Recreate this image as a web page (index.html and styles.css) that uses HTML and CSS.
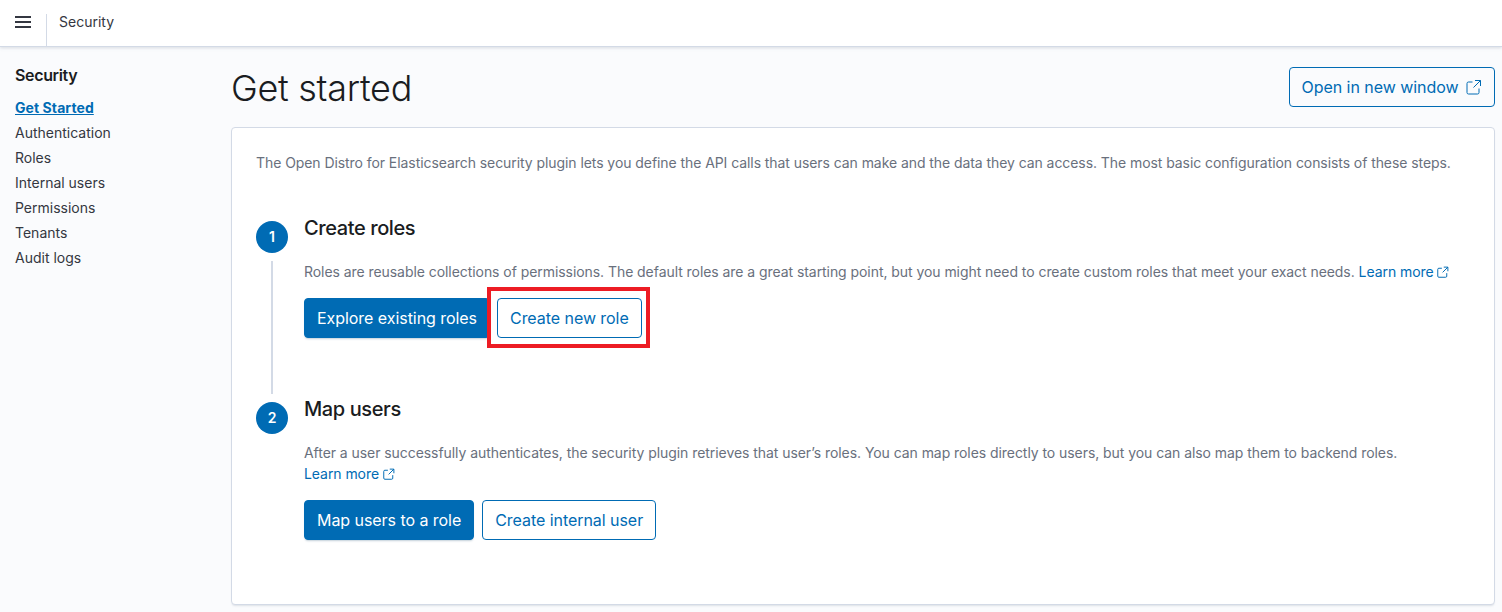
FILE: index.html
```html
<!DOCTYPE html>
<html lang="en">
<head>
<meta charset="utf-8">
<title>Security</title>
<link rel="stylesheet" href="styles.css">
</head>
<body>
<header class="topbar">
  <button class="menu" aria-label="Menu">
    <svg width="16" height="12" viewBox="0 0 16 12"><path d="M0 1h16M0 6h16M0 11h16" stroke="#343741" stroke-width="2" fill="none"/></svg>
  </button>
  <div class="crumb">Security</div>
</header>
<div class="layout">
  <nav class="side">
    <div class="side-title">Security</div>
    <ul class="side-list">
      <li><a class="side-link active" href="#">Get Started</a></li>
      <li><a class="side-link" href="#">Authentication</a></li>
      <li><a class="side-link" href="#">Roles</a></li>
      <li><a class="side-link" href="#">Internal users</a></li>
      <li><a class="side-link" href="#">Permissions</a></li>
      <li><a class="side-link" href="#">Tenants</a></li>
      <li><a class="side-link" href="#">Audit logs</a></li>
    </ul>
  </nav>
  <main class="main">
    <div class="page-head">
      <h1 class="page-title">Get started</h1>
      <a class="btn btn-outline btn-window" href="#">Open in new window
        <svg class="ext-lg" width="16" height="16" viewBox="0 0 16 16"><path d="M6.500 3H2.500A1.500 1.500 0 0 0 1 4.500v9A1.500 1.500 0 0 0 2.500 15h9a1.500 1.500 0 0 0 1.500-1.500V9.500M9 1.500h5.500V7M14.500 1.500 7.500 8.500" stroke="#006bb4" stroke-width="1" fill="none"/></svg>
      </a>
    </div>
    <section class="panel">
      <p class="intro">The Open Distro for Elasticsearch security plugin lets you define the API calls that users can make and the data they can access. The most basic configuration consists of these steps.</p>
      <div class="step step-first">
        <div class="step-num">1</div>
        <div class="step-body">
          <h2 class="step-title">Create roles</h2>
          <p class="step-text">Roles are reusable collections of permissions. The default roles are a great starting point, but you might need to create custom roles that meet your exact needs. <a class="learn" href="#">Learn more <svg class="ext" width="12" height="12" viewBox="0 0 16 16"><path d="M6.500 3H2.500A1.500 1.500 0 0 0 1 4.500v9A1.500 1.500 0 0 0 2.500 15h9a1.500 1.500 0 0 0 1.500-1.500V9.500M9 1.500h5.500V7M14.500 1.500 7.500 8.500" stroke="#006bb4" stroke-width="1.300" fill="none"/></svg></a></p>
          <div class="actions">
            <a class="btn btn-fill" href="#">Explore existing roles</a>
            <span class="highlight"><a class="btn btn-outline" href="#">Create new role</a></span>
          </div>
        </div>
      </div>
      <div class="step">
        <div class="step-num">2</div>
        <div class="step-body">
          <h2 class="step-title">Map users</h2>
          <p class="step-text">After a user successfully authenticates, the security plugin retrieves that user’s roles. You can map roles directly to users, but you can also map them to backend roles. <a class="learn" href="#">Learn more <svg class="ext" width="12" height="12" viewBox="0 0 16 16"><path d="M6.500 3H2.500A1.500 1.500 0 0 0 1 4.500v9A1.500 1.500 0 0 0 2.500 15h9a1.500 1.500 0 0 0 1.500-1.500V9.500M9 1.500h5.500V7M14.500 1.500 7.500 8.500" stroke="#006bb4" stroke-width="1.300" fill="none"/></svg></a></p>
          <div class="actions">
            <a class="btn btn-fill" href="#">Map users to a role</a>
            <a class="btn btn-outline" href="#">Create internal user</a>
          </div>
        </div>
      </div>
    </section>
  </main>
</div>
</body>
</html>
```
FILE: styles.css
```css
* { box-sizing: border-box; }
html, body { margin: 0; height: 100%; overflow: hidden; }
body {
  background: #fafbfd;
  font-family: Inter, "Liberation Sans", sans-serif;
  color: #1a1c21;
  font-size: 14px;
}
a { text-decoration: none; }
.topbar {
  height: 47px;
  background: #fff;
  display: flex;
  align-items: flex-start;
  border-bottom: 1px solid #d3dae6;
  box-shadow: 0 1px 3px rgba(152, 162, 179, .35);
}
.menu {
  width: 47px;
  height: 46px;
  padding: 0 1px 2px 0;
  border: 0;
  background: none;
  display: flex;
  align-items: center;
  justify-content: center;
  position: relative;
}
.menu::after {
  content: "";
  position: absolute;
  right: 0;
  top: 14px;
  bottom: 0;
  width: 1px;
  background: #d3dae6;
}
.crumb {
  margin-left: 12px;
  line-height: 44px;
  color: #343741;
  font-size: 14px;
}
.layout { display: flex; }
.side { width: 231px; padding: 18px 0 0 15px; flex: none; }
.side-title { font-size: 16px; font-weight: 600; line-height: 20px; margin-bottom: 10px; letter-spacing: -.35px; }
.side-list { list-style: none; margin: 0; padding: 0; }
.side-list li { height: 25px; line-height: 25px; }
.side-link { color: #343741; font-size: 14px; }
.side-link.active { color: #006bb4; font-weight: 700; text-decoration: underline; letter-spacing: .08px; }
.main { flex: 1; padding: 0 7px 0 0; min-width: 0; }
.page-head {
  display: flex;
  justify-content: space-between;
  align-items: center;
  height: 80px;
}
.page-title {
  margin: 2px 0 0 0;
  font-size: 36px;
  font-weight: 300;
  line-height: 44px;
  color: #1a1c21;
  letter-spacing: -.3px;
}
.btn {
  display: inline-flex;
  align-items: center;
  height: 40px;
  padding: 0 12px;
  border-radius: 4px;
  font-size: 16px;
  letter-spacing: -.05px;
  white-space: nowrap;
  border: 1px solid #006bb4;
}
.btn-fill {
  background: #006bb4;
  color: #fff;
  box-shadow: 0 2px 2px -1px rgba(54, 97, 126, .3);
}
.btn-outline { color: #006bb4; background: transparent; }
.ext-lg { margin-left: 7.500px; }
.panel {
  height: 478px;
  background: #fff;
  border: 1px solid #d3dae6;
  border-radius: 4px;
  padding: 23px 24px 0;
  box-shadow: 0 2px 2px -1px rgba(152, 162, 179, .3);
}
.intro { margin: 0; line-height: 23px; color: #69707d; font-size: 14px; white-space: nowrap; letter-spacing: -.07px; }
.step { display: flex; gap: 16px; position: relative; }
.step-first { margin-top: 39px; height: 181px; }
.step-first::before {
  content: "";
  position: absolute;
  left: 15px;
  top: 48px;
  bottom: 0;
  width: 2px;
  background: #d3dae6;
}
.step-num {
  width: 32px;
  height: 32px;
  margin-top: 8px;
  border-radius: 50%;
  background: #006bb4;
  color: #fff;
  font-weight: 600;
  font-size: 14px;
  text-align: center;
  line-height: 32px;
  flex: none;
}
.step-title { margin: 0; font-size: 20px; font-weight: 500; line-height: 30px; letter-spacing: -.4px; }
.step-text { margin: 18px 0 0; font-size: 14px; line-height: 21px; color: #69707d; letter-spacing: -.06px; }
.learn { color: #006bb4; white-space: nowrap; }
.ext { vertical-align: -1px; margin-left: 0; }
.actions { display: flex; gap: 8px; margin-top: 16px; }
.highlight { position: relative; margin-left: -1px; }
.highlight::after {
  content: "";
  position: absolute;
  inset: -11px -8px -10px -10px;
  border: 4px solid #ed1c24;
  pointer-events: none;
}
.highlight .btn { background: #fff; }
```
